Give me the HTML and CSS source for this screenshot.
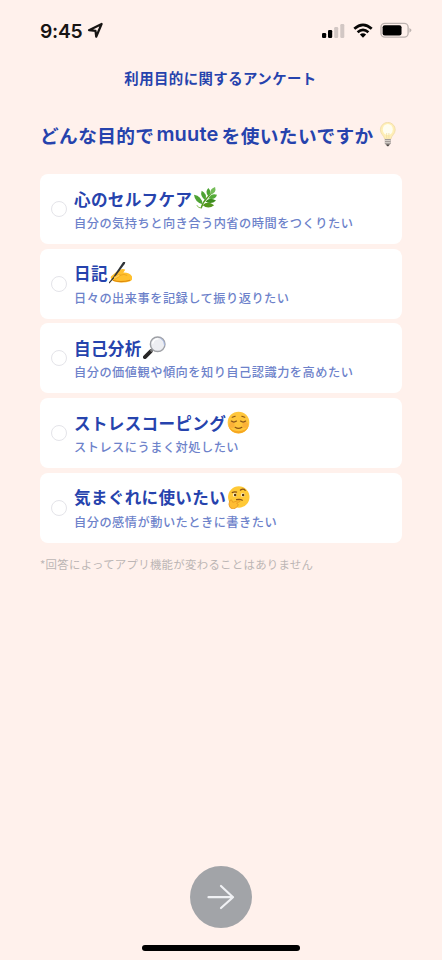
FILE: index.html
```html
<!DOCTYPE html>
<html lang="ja">
<head>
<meta charset="utf-8">
<title>利用目的に関するアンケート</title>
<link rel="stylesheet" href="styles.css">
</head>
<body>
<div class="screen">
  <header class="status">
    <span class="time">9:45</span>
    <svg class="location" width="17" height="17" viewBox="0 0 17 17"><path d="M2 8.2 14.6 2 9.2 14.7 8.5 8.8Z" fill="none" stroke="#171413" stroke-width="2.2" stroke-linejoin="round"/></svg>
    <svg class="signal" width="23" height="16" viewBox="0 0 23 16"><rect x="0" y="10" width="4.2" height="5" rx="1.2"/><rect x="6" y="7" width="4.2" height="8" rx="1.2"/><g fill="#d2c7c4"><rect x="12.2" y="4" width="4" height="11" rx="1.2"/><rect x="18.3" y="1" width="4" height="14" rx="1.2"/></g></svg>
    <svg class="wifi" width="20" height="16" viewBox="0 0 20 16"><g fill="none" stroke="#080706" stroke-width="2.7"><path d="M1.3 5.8Q10-2.1 18.7 5.8"/><path d="M4.6 9.2Q10 4.5 15.4 9.2"/></g><path d="M6.9 11.5Q10 9 13.1 11.5L10 14.7Z"/></svg>
    <svg class="battery" width="32" height="17" viewBox="0 0 33 17"><rect x="1" y="1.2" width="28" height="14.2" rx="4" fill="none" stroke="#bdb3b0" stroke-width="1.4"/><rect x="2.7" y="3" width="19.5" height="10.7" rx="2.2"/><path d="M30.3 5.8q2.5 1.1 2.2 2.5t-2.2 2.5Z" fill="#bdb3b0"/></svg>
  </header>
  <h1>利用目的に関するアンケート</h1>
  <h2><span>どんな目的で</span><span class="brand">muute</span><span>を使いたいですか</span>
    <svg class="bulb" width="18" height="25" viewBox="0 0 18 25"><path d="M5.7 17C5.3 13.5 1.4 12.2 1.4 7.8a7.4 7.4 0 0 1 14.8 0c0 4.4-3.9 5.7-4.3 9.2Z" fill="#ffefb5" stroke="#f3dfae"/><ellipse cx="8.8" cy="7.5" rx="5" ry="5.5" fill="#fffdf0"/><path d="M7.7 11v5m2.2-5v5" fill="none" stroke="#f0dda0" stroke-width=".8"/><path d="M5.8 17h6v4.5l-1.6 2H7.4l-1.6-2Z" fill="#a39b98"/><path d="M6 18.5h5.6M6 20.6h5.6" stroke="#d6d0cb"/><path d="M7.2 22.5h3.2l-1 1.7H8.2Z" fill="#4d4845"/></svg>
  </h2>
  <main class="options">
    <label class="card"><i class="radio"></i><div><h3>心のセルフケア<svg class="emoji leaf" viewBox="0 0 24 24"><path d="M7.5 22Q9 16 14 11T20 3" fill="none" stroke="#55991f" stroke-width="1.4"/><g fill="#4da333"><path d="M15 10Q11 5 15 1q4 4 0 9Z"/><path d="M17 8Q16 2 22 0q2 6-5 8Z" fill="#75bd59"/><path d="M15 12q3-6 9-4-2 6-9 4Z" fill="#55ab39"/><path d="M12 14Q6 10 8 4q6 3 4 10Z"/><path d="M12 15q4-5 11-1-5 5-11 1Z" fill="#3d8d20"/><path d="M9 18Q1 16 0 8q8 1 9 10Z"/><path d="M9 19q5-5 12 0-6 5-12 0Z" fill="#54971c"/></g><path d="M8 22Q4 22 3 19" fill="none" stroke="#80b84e"/></svg></h3><p>自分の気持ちと向き合う内省の時間をつくりたい</p></div></label>
    <label class="card"><i class="radio"></i><div><h3>日記<svg class="emoji" viewBox="0 0 24 24"><path d="M2 15 9 9q5-3 8-1l-2 3q7 0 9 4 1 4-2 5-8 3-17 0-4-2-3-5Z" fill="#ffc02d"/><path d="M4 19q8 3 18 0" fill="none" stroke="#df8a0b" stroke-width="1.2"/><path d="M11 14q5-2 8 0" fill="none" stroke="#e9a11b" stroke-width=".8"/><path d="M2 20 6 13 14 1q1-2 3-1 0 2-2 4L6 16Z" fill="#303438"/><path d="m0 22 5-6" stroke="#303438" stroke-width="1.2"/><path d="m5 16 5-3q3 0 1 2l-5 3" fill="#ffd258" stroke="#e39a14" stroke-width=".6"/></svg></h3><p>日々の出来事を記録して振り返りたい</p></div></label>
    <label class="card"><i class="radio"></i><div><h3>自己分析<svg class="emoji" viewBox="0 0 24 24"><path d="m2 22 6-6" stroke="#282626" stroke-width="4" stroke-linecap="round"/><path d="m8 16 3-3" stroke="#777" stroke-width="2.4"/><circle cx="15.3" cy="8.6" r="7.6" fill="#edeef2" stroke="#9ea0a5" stroke-width="1.5"/><path d="M10 8q1-5 6-5" fill="none" stroke="#fff" stroke-width="1.5"/><path d="M18 2q5 3 4.5 8" fill="none" stroke="#a7b9e5" stroke-width="1"/></svg></h3><p>自分の価値観や傾向を知り自己認識力を高めたい</p></div></label>
    <label class="card"><i class="radio"></i><div><h3>ストレスコーピング<svg class="emoji" viewBox="0 0 24 24"><circle cx="12" cy="12" r="11.3" fill="#ffc63b"/><path d="M1.3 15.5a11.2 11.2 0 0 0 21.4 0q-3 5.5-10.7 5.5T1.3 15.5Z" fill="#f6a621"/><circle cx="5" cy="14.5" r="3" fill="#f79b35" opacity=".5"/><circle cx="19" cy="14.5" r="3" fill="#f79b35" opacity=".5"/><path d="M4.5 10.5q2.7 2 5.4 0m4.2 0q2.7 2 5.4 0M8.5 17q3.5 2.4 7 0M5.5 6.5l3-1m7 0 3 1" fill="none" stroke="#8b5618" stroke-width="1.3" stroke-linecap="round"/></svg></h3><p>ストレスにうまく対処したい</p></div></label>
    <label class="card"><i class="radio"></i><div><h3>気まぐれに使いたい<svg class="emoji" viewBox="0 0 24 24"><circle cx="12.3" cy="11.5" r="11.2" fill="#ffc936"/><circle cx="8" cy="9.3" r="2" fill="#fff0bd"/><circle cx="16.5" cy="9.3" r="2" fill="#fff0bd"/><circle cx="8.5" cy="9.3" r="1.3" fill="#593713"/><circle cx="16.8" cy="9.3" r="1.3" fill="#593713"/><path d="M5.5 6.8q2-1.2 4.5-.5m4-2q3-2 5 .2M10 14.3q3.5-1 6 .5" fill="none" stroke="#8a5416" stroke-width="1.3" stroke-linecap="round"/><path d="M3 15q2-2 3 2l7-2q2 1-1 2l-2 1q3 1 1 3-2 3-5 3-4-1-4-5Z" fill="#ffbd33" stroke="#e69520" stroke-width=".8"/></svg></h3><p>自分の感情が動いたときに書きたい</p></div></label>
  </main>
  <p class="note">*回答によってアプリ機能が変わることはありません</p>
  <button class="next" aria-label="次へ"><svg width="28" height="26" viewBox="0 0 28 26"><path d="M1.5 13.2H26M14 2l12 11.2L14 24" fill="none" stroke="#f0f1f4" stroke-width="2.2" stroke-linecap="round" stroke-linejoin="round"/></svg></button>
  <div class="home"></div>
</div>
</body>
</html>
```

FILE: styles.css
```css
* { box-sizing: border-box; }
body { margin: 0; background: #fff1ec; font-family: "Noto Sans CJK JP", sans-serif; color: #2643ad; }
h1, h2, h3, p { margin: 0; white-space: nowrap; }
svg { flex: none; }
.screen { width: 442px; height: 960px; display: flex; flex-direction: column; overflow: hidden; }
.status { height: 61px; padding: 0 30px 0 40px; display: flex; align-items: center; }
.time { font: 600 19.3px/24px Inter, sans-serif; color: #171413; letter-spacing: -.3px; width: 42px; }
.location { margin-left: 5px; }
.signal { margin-left: auto; }
.wifi { margin-left: 8px; }
.battery { margin-left: 7px; }
h1 { height: 34px; line-height: 34px; text-align: center; font-size: 14.4px; font-weight: 700; letter-spacing: .45px; padding-right: 1px; }
h2 { height: 79px; margin-left: 40px; padding-bottom: 1px; display: flex; align-items: center; font-size: 18.7px; font-weight: 700; letter-spacing: .38px; }
.brand { font-family: Inter, sans-serif; font-size: 20px; font-weight: 600; letter-spacing: .2px; margin: 0 3px 0 2px; }
.bulb { margin-left: 5px; }
.options { margin-left: 40px; width: 362px; display: flex; flex-direction: column; gap: 4.7px; }
.card { height: 70px; border-radius: 8px; background: #fff; display: flex; align-items: center; padding-left: 11px; gap: 7px; }
.radio { width: 16px; height: 16px; border: 1.4px solid #e4e4e9; border-radius: 50%; }
h3 { display: flex; align-items: center; height: 25px; font-size: 16.6px; font-weight: 700; letter-spacing: .3px; }
.card div { padding-top: 2px; }
.emoji { width: 23px; height: 23px; margin-left: 1px; }
.leaf { margin-left: 2px; }
.card p { height: 23px; line-height: 24px; font-size: 12.2px; letter-spacing: .51px; font-weight: 500; color: #6d82ca; }
.note { margin: 10px 0 0 40px; height: 22px; line-height: 22px; font-size: 11.4px; letter-spacing: .3px; color: #bcb6b5; }
.next { margin: auto auto 17px; width: 62px; height: 62px; border: 0; padding: 0; border-radius: 50%; background: #a2a4a8; display: grid; place-items: center; }
.home { width: 158px; height: 6px; background: #000; border-radius: 3px; margin: 0 auto 9px; }
```
